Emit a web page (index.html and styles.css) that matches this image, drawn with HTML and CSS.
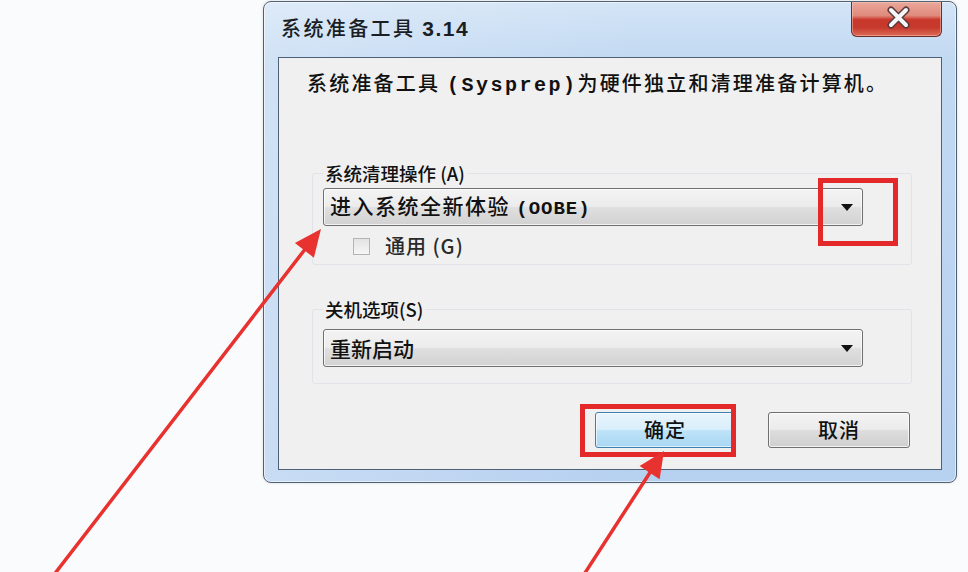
FILE: index.html
```html
<!DOCTYPE html>
<html lang="zh-CN">
<head>
<meta charset="utf-8">
<title>系统准备工具 3.14</title>
<link rel="stylesheet" href="styles.css">
</head>
<body>
  <div class="window">
    <div class="titlebar">
      <div class="title">系统准备工具 <span class="ver">3.14</span></div>
      <div class="close">
        <svg width="91" height="35" viewBox="0 0 91 35">
          <path d="M40 9 L55 24 M55 9 L40 24" stroke="#5a3a3a" stroke-width="7" stroke-linecap="round" fill="none"/>
          <path d="M40 9 L55 24 M55 9 L40 24" stroke="#f4f6fa" stroke-width="4" stroke-linecap="round" fill="none"/>
        </svg>
      </div>
    </div>
    <div class="client">
      <p class="desc">系统准备工具 <span class="lat">(Sysprep)</span>为硬件独立和清理准备计算机。</p>
      <fieldset class="group g1">
        <legend>系统清理操作 (A)</legend>
        <div class="combo combo1">
          <span>进入系统全新体验 <span class="lat2">(OOBE)</span></span>
          <svg class="drop" width="12" height="7" viewBox="0 0 12 7"><path d="M0 0 H12 L6 7 Z" fill="#111"/></svg>
        </div>
        <div class="check"><span class="box"></span><span class="check-label">通用 (G)</span></div>
      </fieldset>
      <fieldset class="group g2">
        <legend>关机选项(S)</legend>
        <div class="combo combo2">
          <span>重新启动</span>
          <svg class="drop" width="12" height="7" viewBox="0 0 12 7"><path d="M0 0 H12 L6 7 Z" fill="#111"/></svg>
        </div>
      </fieldset>
      <div class="buttons">
        <div class="btn btn-default">确定</div>
        <div class="btn btn-cancel">取消</div>
      </div>
    </div>
  </div>

  <div class="mark mark-drop"></div>
  <div class="mark mark-ok"></div>
  <svg class="arrows" width="968" height="572" viewBox="0 0 968 572">
    <g stroke="#e8322f" stroke-width="3.5" stroke-linecap="round" fill="none">
      <line x1="53" y1="576" x2="306" y2="248"/>
      <line x1="583" y1="576" x2="651" y2="471"/>
    </g>
    <g fill="#e8322f">
      <polygon points="321,229 313.9,257.7 294.9,242.9"/>
      <polygon points="664,451 659.6,479.3 639.6,465.9"/>
    </g>
  </svg>
</body>
</html>
```
FILE: styles.css
```css
html, body {
  margin: 0;
  padding: 0;
}

body {
  width: 968px;
  height: 572px;
  overflow: hidden;
  position: relative;
  background: #fafbfc;
  font-family: "Noto Sans CJK SC", "Noto Sans", sans-serif;
  font-weight: 500;
  color: #111;
}

.window {
  box-sizing: border-box;
  width: 694px;
  height: 482px;
  margin: 1px 0 0 263px;
  border: 1px solid #4f6175;
  border-radius: 8px;
  background:
    linear-gradient(90deg, rgba(255,255,255,0.25) 0, rgba(255,255,255,0) 55%),
    linear-gradient(180deg, #d3e4f6 0, #c2d9f2 56px, #b6d0f0 100%);
  box-shadow: inset 0 0 0 1px rgba(255,255,255,0.55), 0 0 3px rgba(0,0,0,0.15);
  padding: 0 14px 12px 14px;
  display: flex;
  flex-direction: column;
}

.titlebar {
  height: 55px;
  display: flex;
  justify-content: space-between;
  align-items: flex-start;
}

.title {
  margin-top: 14px;
  padding-left: 3px;
  font-size: 20px;
  line-height: 24px;
  letter-spacing: 2.4px;
  color: #1a1e24;
}

.title .ver {
  font-family: "Liberation Sans", sans-serif;
  font-weight: bold;
  font-size: 21px;
  letter-spacing: 1.5px;
}

.close {
  width: 91px;
  height: 35px;
  box-sizing: border-box;
  border: 1px solid #6a2e28;
  border-top: none;
  border-radius: 0 0 6px 6px;
  background: linear-gradient(180deg, #eaa79b 0, #e08a7c 40%, #c8372b 52%, #c63a2c 75%, #dd6a57 100%);
  box-shadow: inset 0 0 0 1px rgba(255,210,200,0.45);
  overflow: hidden;
}

.close svg {
  display: block;
  margin: -1px 0 0 -1px;
}

.client {
  flex: 1;
  background: #f0f0f0;
  border: 1px solid #4e6075;
  display: flex;
  flex-direction: column;
  align-items: flex-start;
}

.desc {
  margin: 13px 0 0 28px;
  font-size: 20px;
  line-height: 24px;
  letter-spacing: 2.2px;
  white-space: nowrap;
}

.lat {
  font-family: "Liberation Mono", monospace;
  font-weight: bold;
  letter-spacing: 2.5px;
}

.group {
  box-sizing: border-box;
  width: 600px;
  margin: 0 0 0 33px;
  padding: 0;
  border: 1px solid #e0e3e7;
  border-radius: 3px;
  min-width: 0;
}

.group legend {
  margin-left: 10px;
  padding: 0 2px;
  font-size: 18.5px;
  line-height: 24px;
}

.g1 {
  margin-top: 63px;
  padding-bottom: 8px;
}

.g2 {
  margin-top: 32px;
  padding-bottom: 16px;
}

.combo {
  box-sizing: border-box;
  width: 540px;
  height: 38px;
  margin-left: 10px;
  border: 1px solid #707070;
  border-radius: 3px;
  background: linear-gradient(180deg, #f3f3f3 0, #ececec 48%, #dfdfdf 52%, #d2d2d2 100%);
  box-shadow: inset 0 0 0 1px rgba(255,255,255,0.7);
  display: flex;
  align-items: center;
  justify-content: space-between;
  padding: 0 9px 0 6px;
  font-size: 21px;
  line-height: 24px;
}

.combo1 {
  margin-top: 3px;
}

.combo1 > span {
  letter-spacing: 1.5px;
}

.combo2 {
  margin-top: 8px;
}

.lat2 {
  font-family: "Liberation Mono", monospace;
  font-weight: bold;
  font-size: 19px;
  letter-spacing: 1px;
}

.drop {
  display: block;
  margin-top: 1px;
}

.check {
  display: flex;
  align-items: center;
  margin: 10px 0 0 40px;
  height: 20px;
}

.box {
  box-sizing: border-box;
  width: 17px;
  height: 17px;
  border: 1px solid #b4b4b4;
  background: linear-gradient(180deg, #e3e3e3, #f6f6f6);
}

.check-label {
  margin-left: 15px;
  font-size: 20px;
  line-height: 20px;
  letter-spacing: 1px;
  color: #2a2a2a;
}

.buttons {
  align-self: stretch;
  display: flex;
  justify-content: flex-end;
  gap: 33px;
  margin-top: 28px;
  padding-right: 31px;
}

.btn {
  box-sizing: border-box;
  height: 36px;
  border: 1px solid #707070;
  border-radius: 3px;
  background: linear-gradient(180deg, #f3f3f3 0, #ebebeb 48%, #dddddd 52%, #cfcfcf 100%);
  box-shadow: inset 0 0 0 1px rgba(255,255,255,0.75);
  display: flex;
  align-items: center;
  justify-content: center;
  font-size: 20px;
  line-height: 24px;
  letter-spacing: 1px;
}

.btn-default {
  width: 140px;
  border-color: #3c7fb1;
  background: linear-gradient(180deg, #e9f5fc 0, #d9eefb 48%, #bee3f8 52%, #a9d7f3 100%);
  box-shadow: inset 0 0 0 1px rgba(255,255,255,0.6);
}

.btn-cancel {
  width: 142px;
}

.mark {
  position: absolute;
  box-sizing: border-box;
  border: 5px solid #e4292b;
}

.mark-drop {
  left: 818px;
  top: 178px;
  width: 80px;
  height: 68px;
}

.mark-ok {
  left: 580px;
  top: 404px;
  width: 156px;
  height: 53px;
}

.arrows {
  position: absolute;
  left: 0;
  top: 0;
  pointer-events: none;
}
```
